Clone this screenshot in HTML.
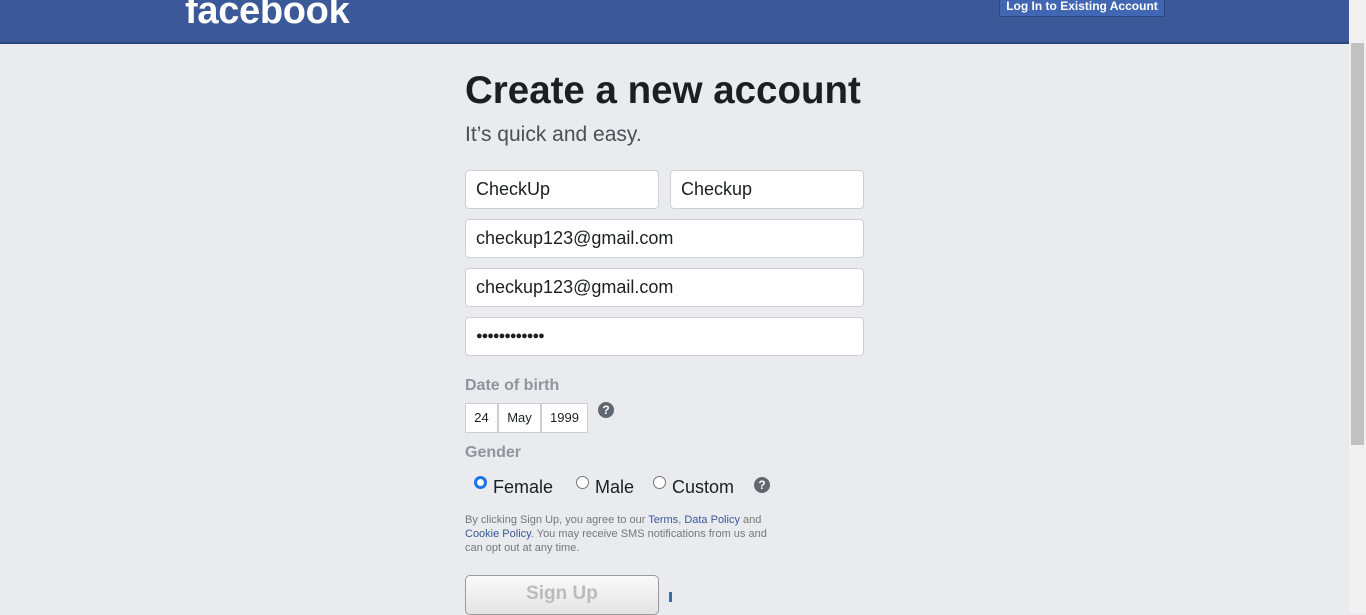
<!DOCTYPE html>
<html><head><style>
body{margin:0;width:1366px;height:613px;overflow:hidden;background:#e9ebee;font-family:"Liberation Sans",sans-serif;position:relative}
.top{position:absolute;left:0;top:0;width:1349px;height:42px;background:#3b5998;border-bottom:2px solid #29487d}
.logo{position:absolute;left:185px;top:-10px;color:#fff;font-weight:bold;font-size:38px;letter-spacing:-0.3px}
.login{position:absolute;left:999px;top:-4px;width:164px;height:19px;background:#4267b2;border:1px solid #29487d;color:#fff;font-size:12px;font-weight:bold;text-align:center;line-height:18px}
.sb{position:absolute;left:1349px;top:0;width:17px;height:613px;background:#f1f1f1}
.thumb{position:absolute;left:1351px;top:43px;width:13px;height:402px;background:#c1c1c1}
h1{position:absolute;left:465px;top:69px;margin:0;font-size:38.5px;color:#1c1e21;font-weight:bold}
.sub{position:absolute;left:465px;top:123px;font-size:21px;color:#4b4f56}
.in{position:absolute;box-sizing:border-box;background:#fff;border:1px solid #ccd0d5;border-radius:4px;height:39px;padding-left:10px;line-height:37px;font-size:18px;color:#1c1e21}
.lbl{position:absolute;left:465px;font-size:16px;font-weight:bold;color:#90949c}
.sel{position:absolute;top:403px;height:30px;box-sizing:border-box;background:#fff;border:1px solid #ccd0d5;font-size:13px;line-height:28px;text-align:center;color:#1c1e21}
.q{position:absolute;width:16px;height:16px;border-radius:50%;background:#606770;color:#fff;font-size:12px;font-weight:bold;text-align:center;line-height:16px}
.r{position:absolute;top:476px;font-size:18px;color:#1c1e21}
.rd{display:inline-block;width:13px;height:13px;border:1px solid #767676;border-radius:50%;background:#fff;vertical-align:4px;margin-right:6px;box-sizing:border-box}
.terms{position:absolute;left:465px;top:513px;width:310px;font-size:11px;line-height:14px;color:#777}
.terms a{color:#385898}
.btn{position:absolute;left:465px;top:575px;width:194px;height:40px;box-sizing:border-box;border:1px solid #999;border-radius:5px;background:linear-gradient(#fafafa,#e4e4e4);color:#bbb;font-size:19px;font-weight:bold;text-align:center;line-height:36px}
</style></head><body>
<div class="top"><div class="logo">facebook</div><div class="login">Log In to Existing Account</div></div>
<div class="sb"></div><div class="thumb"></div>
<h1>Create a new account</h1>
<div class="sub">It’s quick and easy.</div>
<div class="in" style="left:465px;top:170px;width:194px">CheckUp</div>
<div class="in" style="left:670px;top:170px;width:194px">Checkup</div>
<div class="in" style="left:465px;top:219px;width:399px">checkup123@gmail.com</div>
<div class="in" style="left:465px;top:268px;width:399px">checkup123@gmail.com</div>
<div class="in" style="left:465px;top:317px;width:399px;font-size:11px;letter-spacing:-1px">●●●●●●●●●●●●</div>
<div class="lbl" style="top:377px">Date of birth</div>
<div class="sel" style="left:465px;width:33px">24</div>
<div class="sel" style="left:498px;width:43px">May</div>
<div class="sel" style="left:541px;width:47px">1999</div>
<div class="q" style="left:598px;top:402px">?</div>
<div class="lbl" style="top:444px">Gender</div>
<div class="r" style="left:474px"><span class="rd" style="border:3px solid #1a73e8"></span>Female</div>
<div class="r" style="left:576px"><span class="rd"></span>Male</div>
<div class="r" style="left:653px"><span class="rd"></span>Custom</div>
<div class="q" style="left:754px;top:477px">?</div>
<div class="terms">By clicking Sign Up, you agree to our <a>Terms</a>, <a>Data Policy</a> and <a>Cookie Policy</a>. You may receive SMS notifications from us and can opt out at any time.</div>
<div class="btn">Sign Up</div>
<div style="position:absolute;left:669px;top:592px;width:3px;height:10px;background:#4267b2"></div>
</body></html>
